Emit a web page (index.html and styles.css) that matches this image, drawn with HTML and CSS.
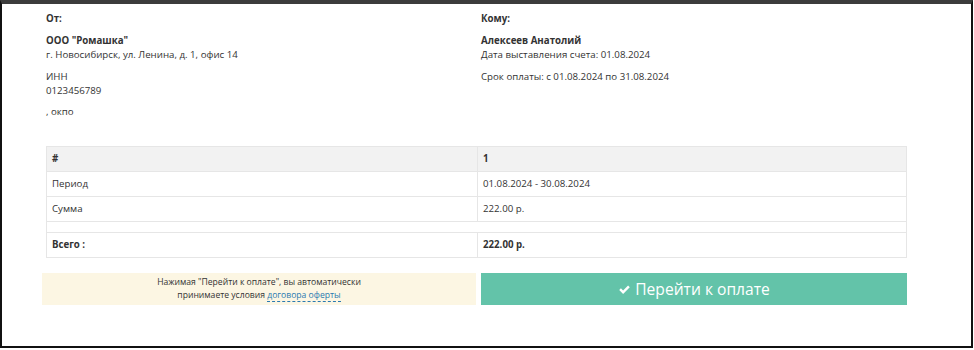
FILE: index.html
```html
<!DOCTYPE html>
<html lang="ru">
<head>
    <meta charset="UTF-8">
    <meta name="viewport" content="width=device-width, initial-scale=1.0">
    <title>Счет на оплату</title>
    <link rel="stylesheet" href="styles.css">
</head>
<body>
    <div class="frame">
        <div class="invoice">
            <div class="parties">
                <div class="party">
                    <p class="label">От:</p>
                    <p><b>ООО "Ромашка"</b><br>г. Новосибирск, ул. Ленина, д. 1, офис 14</p>
                    <p>ИНН<br>0123456789</p>
                    <p>, окпо</p>
                </div>
                <div class="party">
                    <p class="label">Кому:</p>
                    <p><b>Алексеев Анатолий</b><br>Дата выставления счета: 01.08.2024</p>
                    <p>Срок оплаты: с 01.08.2024 по 31.08.2024</p>
                </div>
            </div>

            <table class="items">
                <thead>
                    <tr>
                        <th>#</th>
                        <th>1</th>
                    </tr>
                </thead>
                <tbody>
                    <tr>
                        <td>Период</td>
                        <td>01.08.2024 - 30.08.2024</td>
                    </tr>
                    <tr>
                        <td>Сумма</td>
                        <td>222.00 р.</td>
                    </tr>
                    <tr class="spacer">
                        <td colspan="2"></td>
                    </tr>
                    <tr class="total">
                        <td>Всего :</td>
                        <td>222.00 р.</td>
                    </tr>
                </tbody>
            </table>

            <div class="pay">
                <div class="notice">
                    Нажимая "Перейти к оплате", вы автоматически<br>
                    принимаете условия <a href="#">договора оферты</a>
                </div>
                <button class="pay-btn">
                    <svg class="check" viewBox="0 0 16 16" width="13" height="13">
                        <path d="M1.5 8.6 L3.6 6.5 L6.3 9.2 L12.4 3.1 L14.5 5.2 L6.3 13.4 Z" fill="#fff"/>
                    </svg>
                    Перейти к оплате
                </button>
            </div>
        </div>
    </div>
</body>
</html>
```

FILE: styles.css
```css
/* General */
body {
    margin: 0;
    font-family: "Open Sans", Arial, sans-serif;
    font-size: 9.7px;
    line-height: 14px;
    color: #333;
    background-color: #fff;
}

.frame {
    width: 969px;
    height: 342px;
    border-top: 4px solid #3c3c3c;
    border-left: 2px solid #111;
    border-right: 2px solid #111;
    border-bottom: 2px solid #111;
}

.invoice {
    width: 865px;
    margin-left: 40px;
    padding-top: 8px;
}

/* From / to */
.parties {
    display: grid;
    grid-template-columns: 435px 1fr;
    height: 134px;
}

.party {
    padding-left: 4px;
}

.party p {
    margin: 0 0 7px;
}

.party .label {
    font-weight: 700;
    margin-bottom: 8px;
}

.party p:nth-child(2) {
    margin-bottom: 8px;
}

/* Table */
.items {
    margin-left: 4px;
    width: 861px;
    border-collapse: collapse;
    table-layout: fixed;
}

.items th,
.items td {
    border: 1px solid #e6e6e6;
    padding: 5px 5px;
    text-align: left;
    height: 13px;
}

.items th {
    background-color: #f2f2f2;
    font-weight: 700;
}

.items th:first-child {
    width: 420px;
}

.items .spacer td {
    height: 0;
    padding: 5px;
}

.items .total td {
    font-weight: 700;
}

/* Payment */
.pay {
    display: grid;
    grid-template-columns: 434px 1fr;
    gap: 5px;
    margin-top: 15px;
}

.notice {
    background-color: #fcf6e3;
    text-align: center;
    font-size: 8.6px;
    line-height: 13px;
    padding: 3px 0 3px;
    height: 26px;
}

.notice a {
    color: #2a7ab0;
    text-decoration: none;
    border-bottom: 1px dashed #2a7ab0;
}

.pay-btn {
    background-color: #63c3a9;
    border: none;
    color: #fff;
    font-family: "Open Sans", Arial, sans-serif;
    font-size: 15.6px;
    height: 32px;
    cursor: pointer;
    display: flex;
    align-items: center;
    justify-content: center;
    gap: 4px;
}
```
